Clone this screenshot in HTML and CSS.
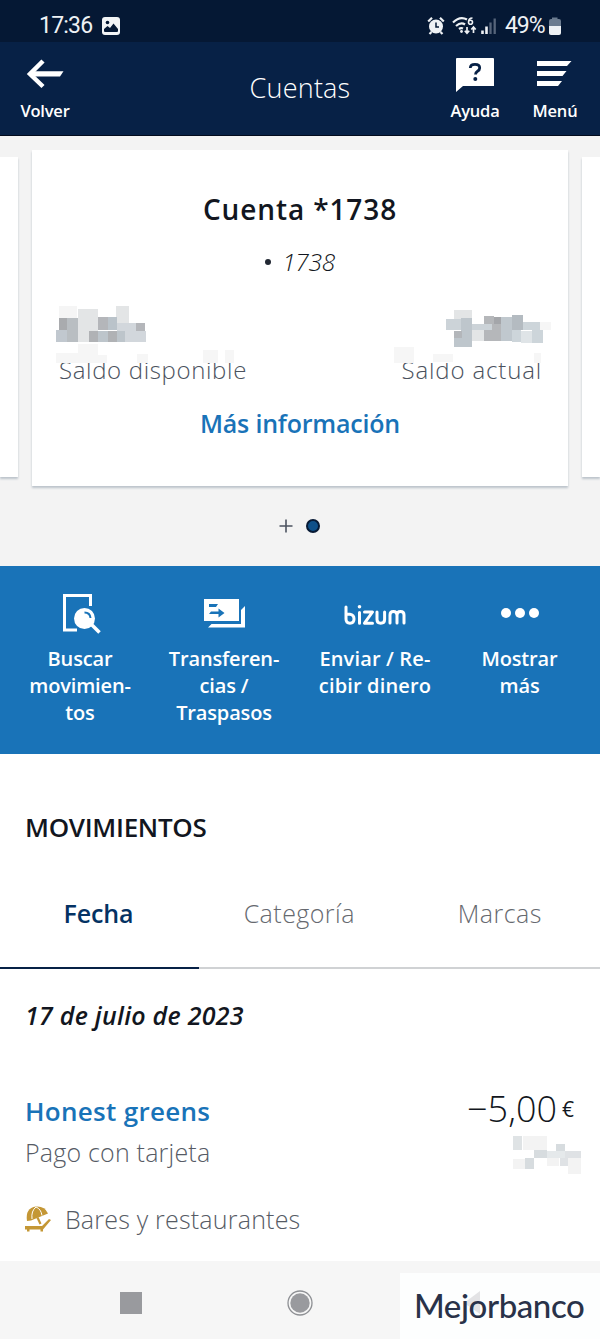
FILE: index.html
```html
<!DOCTYPE html>
<html lang="es">
<head>
<meta charset="utf-8">
<title>Cuentas</title>
<link rel="stylesheet" href="styles.css">
</head>
<body>
<div class="status">
  <span class="clock">17:36</span>
  <svg class="photo" width="18" height="18" viewBox="0 0 18 18"><rect width="18" height="18" rx="3" fill="#f2f4f6"/><path d="M2 14v-2l3.500-3 2.500 2 3.500-4.500L16 12v2q0 1-1 1H3q-1 0-1-1z" fill="#051834"/><circle cx="5.500" cy="5.500" r="1.800" fill="#051834"/></svg>
  <svg class="signals" width="72" height="20" viewBox="0 0 72 20" fill="none" stroke="#eef1f4">
    <circle cx="9" cy="10.500" r="7" fill="#eef1f4" stroke="none"/><path d="M1.200 5.500 5 1.800M13 1.800l3.800 3.700M4.500 16l-2 2M13.500 16l2 2" stroke-width="2.200"/><path d="M9 6.500v4.500h3" stroke="#051834" stroke-width="1.500"/>
    <path d="M26 6.500q7-7 14-3M29 10q5-4.500 9-1.500M32 13q2-1.500 4-.5" stroke-width="2.200"/><circle cx="34.500" cy="15.500" r="1.400" fill="#eef1f4" stroke="none"/>
    <path d="M45.500 2q-4 0-4 4.200M41.500 6.200a2 2 0 1 0 4 0 2 2 0 1 0-4 0" stroke-width="1.600"/>
    <path d="M40 11v6m-2.200-2.300 2.200 2.500 2.200-2.500M46.500 17v-6m-2.200 2.500 2.200-2.500 2.200 2.500" stroke-width="1.700"/>
    <path d="M55.500 18v-3.500M59.500 18v-7.500" stroke-width="2.600"/><path d="M63.500 18V6.500M67.700 18V2.500" stroke="#56647a" stroke-width="2.300"/>
  </svg>
  <span class="percent">49%</span>
  <svg width="14" height="20" viewBox="0 0 14 20"><path d="M4 3V1.500h5.500V3H11q2 0 2 2v6H1V5q0-2 2-2z" fill="#6b7b8f"/><path d="M1 10h12v7q0 2-2 2H3q-2 0-2-2z" fill="#eef1f4"/></svg>
</div>
<header class="topbar">
  <div class="nav back">
    <svg width="38" height="30" viewBox="0 0 38 30" fill="none" stroke="#fff" stroke-width="4.500"><path d="M17 2 4 15l13 12.500"/><path d="M5 12.300h32.500L34 17.500H5z" fill="#fff" stroke="none"/></svg>
    <span>Volver</span>
  </div>
  <h1>Cuentas</h1>
  <div class="nav help">
    <svg width="40" height="36" viewBox="0 0 40 36"><path d="M2 1h36q1 0 1 1v27H8l-7 6V2q0-1 1-1z" fill="#fff"/><path d="M15.300 11q0-3.700 4.700-3.700t4.700 3.600q0 2-2.200 3.300-2 1.200-2 3.300" fill="none" stroke="#072146" stroke-width="2.800"/><circle cx="20.300" cy="22" r="2" fill="#072146"/></svg>
    <span>Ayuda</span>
  </div>
  <div class="nav menu">
    <svg width="36" height="28" viewBox="0 0 36 28" fill="#fff"><path d="M1 1h34.500l-4.500 5H1zM1 11h29.500l-4 5H1zM1 21h25l-4 5H1z"/></svg>
    <span>Menú</span>
  </div>
</header>
<section class="carousel">
  <div class="cards">
    <div class="peek"></div>
    <article class="card">
      <h2>Cuenta *1738</h2>
      <p class="alias"><i class="bullet"></i>1738</p>
      <div class="balances">
        <div class="balance left">
          <span>Saldo disponible</span>
          <svg class="mosaic" width="200" height="64" viewBox="0 0 200 64"><path d="M0 20h200v43H0z" fill="#fff"/>
            <path d="M4 6h18v12H4z" fill="#f5f5f5"/><path d="M23 9h20v33H23z" fill="#e3e5e6"/><path d="M61 6h13v17H61z" fill="#e3e5e6"/><path d="M4 18h8v12H4z" fill="#a9abae"/><path d="M12 18h11v24H12z" fill="#b9bec2"/><path d="M1 30h11v12H1z" fill="#c1c8cf"/><path d="M43 17h10v13H43z" fill="#b4b6ba"/><path d="M53 17h9v13h-9z" fill="#bac3ca"/><path d="M62 23h19v8H62zM70 31h21v11H70z" fill="#d2d7dc"/><path d="M81 23h9v8h-9z" fill="#b4b6ba"/><path d="M34 31h9v11h-9zM53 31h9v11h-9z" fill="#b0b2b5"/><path d="M43 31h10v11H43zM62 31h8v11h-8z" fill="#bdc5cb"/>
            <path d="M1 53h22v10H1zM23 44h20v19H23zM43 55h9v8h-9zM82 54h11v9H82zM148 50h15v13h-15zM170 50h9v13h-9z" fill="#f6f6f6"/></svg>
        </div>
        <div class="balance right">
          <span>Saldo actual</span>
          <svg class="mosaic" width="160" height="64" viewBox="0 0 160 64"><path d="M0 20h160v43H0z" fill="#fff"/>
            <path d="M61 10h18v9H61z" fill="#e3e5e6"/><path d="M53 19h15v11H53zM79 24h20v6H79z" fill="#ccd3d8"/><path d="M68 18h11v29H68zM61 38h7v9h-7z" fill="#bec6cc"/><path d="M61 31h8v7h-8z" fill="#b3b6ba"/><path d="M79 30h12v11H79z" fill="#e3e5e6"/><path d="M91 16h10v8H91zM91 30h17v11H91z" fill="#b5b7ba"/><path d="M101 17h8v7h-8z" fill="#a4a6aa"/><path d="M99 24h9v6h-9z" fill="#b5b7ba"/><path d="M108 17h11v24h-11z" fill="#c0c8ce"/><path d="M119 15h11v15h-11z" fill="#b4bbc1"/><path d="M119 30h9v12h-9zM130 22h17v8h-17zM139 30h11v13h-11z" fill="#cdd5da"/><path d="M128 31h11v12h-11z" fill="#dfe4e7"/><path d="M147 22h11v8h-11zM1 47h20v16H1zM40 54h20v8H40zM141 53h7v10h-7z" fill="#f6f6f6"/></svg>
        </div>
      </div>
      <a class="more">Más información</a>
    </article>
    <div class="peek"></div>
  </div>
  <div class="pager">
    <svg width="14" height="14" viewBox="0 0 14 14"><path d="M7 .5v13M.5 7h13" stroke="#4c5360" stroke-width="1.600"/></svg>
    <i class="dot"></i>
  </div>
</section>
<nav class="actions">
  <div class="action a1">
    <svg width="40" height="42" viewBox="0 0 40 42"><path d="M28.500 14V3.500H2.500V38H15" fill="none" stroke="#fff" stroke-width="3"/><circle cx="22.500" cy="26.500" r="10.500" fill="#fff"/><path d="m29 32 8.500 8.500" stroke="#fff" stroke-width="3.500"/><path d="M22.500 20.500q5.500 0 6 5.500" fill="none" stroke="#1973b8" stroke-width="2"/></svg>
    <span>Buscar<br>movimien-<br>tos</span>
  </div>
  <div class="action a2">
    <svg width="42" height="42" viewBox="0 0 42 42"><path d="M1 7h35v22H1z" fill="#fff"/><path d="M5 35.500 8.500 32H38V18l4-4v21.500z" fill="#fff"/><path d="M6 12h9l-2 3H6zM6 22l2-2.500h7.500V16.500l6 4.500-6 4.500V22z" fill="#1973b8"/></svg>
    <span>Transferen-<br>cias /<br>Traspasos</span>
  </div>
  <div class="action a3">
    <svg width="64" height="42" viewBox="0 0 64 42" fill="none" stroke="#fff" stroke-width="3" stroke-linecap="round" stroke-linejoin="round"><path d="M3 15v12q0 4.200 4 4.200t4-4.200-4-4.700H3.500M16.500 20.500v10.700M21.500 20h8l-8 11.200h8M34 20v7.500q0 3.700 3.800 3.700t3.800-3.700V20M47 31V23q0-3.500 3.400-3.500T54 23v8m0-8q0-3.500 3.500-3.500T61 23v8"/><circle cx="16.500" cy="14.800" r="1.800" fill="#fff" stroke="none"/></svg>
    <span>Enviar / Re-<br>cibir dinero</span>
  </div>
  <div class="action a4">
    <svg width="40" height="42" viewBox="0 0 40 42" fill="#fff"><circle cx="6" cy="21" r="5"/><circle cx="20" cy="21" r="5"/><circle cx="34" cy="21" r="5"/></svg>
    <span>Mostrar<br>más</span>
  </div>
</nav>
<main>
  <h3>MOVIMIENTOS</h3>
  <div class="tabs">
    <div class="tab active">Fecha</div>
    <div class="tab">Categoría</div>
    <div class="tab">Marcas</div>
  </div>
  <p class="date">17 de julio de 2023</p>
  <div class="movement">
    <div>
      <p class="merchant">Honest greens</p>
      <p class="method">Pago con tarjeta</p>
    </div>
    <div class="money">
      <p class="amount"><span>−5,00</span><small>€</small></p>
      <svg width="70" height="40" viewBox="0 0 70 40"><path d="M11 1h24v14H11zM1 24h12v10H1zM35 23h12v8H35zM56 22h13v17H56z" fill="#f3f3f3"/><path d="M1 1h9v14H1z" fill="#dfe3e5"/><path d="M22 15h13v8H22z" fill="#d7dcdf"/><path d="M13 23h9v11h-9zM44 9h9v7h-9z" fill="#d7dcdf"/><path d="M35 16h18v7H35z" fill="#e5e9eb"/><path d="M53 16h16v7H53zM48 23h8v8h-8z" fill="#dfe2e5"/></svg>
    </div>
  </div>
  <div class="category">
    <svg width="28" height="28" viewBox="0 0 28 28" fill="#c49735"><path d="M3 16Q1 3 12 1.500q9-.5 12 7L7 15.500z"/><path d="M8 14Q7 6 12 2M18 10.500Q17 4 12 2" fill="none" stroke="#fff"/><path d="m13.500 12.500 3 6.500" stroke="#c49735" stroke-width="2.200"/><path d="M1 21h17l7-7 2 1-8 9.500v2h-2.500v-2h-11v2H3v-2H1z"/></svg>
    <span>Bares y restaurantes</span>
  </div>
</main>
<footer>
  <svg width="22" height="22"><rect width="22" height="22" fill="#999a9e"/></svg>
  <svg class="home" width="26" height="26" viewBox="0 0 26 26"><circle cx="13" cy="13" r="12" fill="#f6f6f6" stroke="#8e9094" stroke-width="1.300"/><circle cx="13" cy="13" r="9.700" fill="#999a9e"/></svg>
  <div class="brand"><svg width="17" height="24" viewBox="0 0 17 24"><path d="M16 0v23L0 12z" fill="#e3e3e5"/></svg><span>Mejorbanco</span></div>
</footer>
</body>
</html>
```
FILE: styles.css
```css
* { box-sizing: border-box; margin: 0; padding: 0; }
body { width: 600px; height: 1339px; display: flex; flex-direction: column; overflow: hidden; background: #fff; color: #121620; font-family: "Open Sans", "Noto Sans", sans-serif; white-space: nowrap; }
svg { display: block; flex: none; }
h1, h2, h3 { font-weight: 400; }
.status { height: 42px; flex: none; display: flex; align-items: center; padding: 9px 38px 0 39px; background: #051834; color: #eef1f4; font-family: Roboto, sans-serif; font-size: 23px; }
.clock { width: 63px; letter-spacing: -0.8px; }
.signals { margin-left: auto; margin-right: 6px; }
.percent { width: 43px; letter-spacing: -1.1px; }
.topbar { height: 94px; flex: none; display: flex; justify-content: space-between; background: #072146; border-bottom: 1px solid #020b1d; color: #fff; padding: 0 18px; }
.nav { display: flex; flex-direction: column; align-items: center; width: 54px; font-weight: 600; font-size: 16.5px; letter-spacing: -0.2px; }
.nav span { line-height: 24px; margin-top: auto; margin-bottom: 12px; }
.nav svg { margin-top: 17px; }
.help { margin-left: auto; margin-right: 26px; }
.nav.help svg { margin-top: 15px; }
.nav.menu svg { margin-top: 18px; margin-left: -2px; }
h1 { flex: 1; padding-left: 80px; padding-top: 26px; text-align: center; font-size: 27px; font-weight: 350; line-height: 40px; letter-spacing: 0.2px; }
.carousel { height: 430px; flex: none; background: #f3f3f3; padding-top: 14px; }
.cards { display: flex; justify-content: space-between; height: 337px; }
.peek { width: 18px; height: 320px; margin-top: 7px; background: #fff; box-shadow: 0 2px 2px #bcc4cb; }
.card { width: 536px; height: 336px; background: #fff; box-shadow: 0 2px 2px #bcc4cb; text-align: center; padding-top: 39px; }
h2 { font-size: 28px; font-weight: 600; line-height: 40px; letter-spacing: 0.9px; }
.alias { display: flex; justify-content: center; align-items: center; gap: 11px; font-size: 24.5px; font-style: italic; font-weight: 350; line-height: 36px; margin-top: 15px; letter-spacing: -0.3px; }
.bullet { width: 6px; height: 6px; border-radius: 50%; background: #222833; }
.balances { display: flex; justify-content: space-between; padding: 0 26px 0 27px; margin-top: 20px; height: 86px; }
.balance { position: relative; padding-top: 53px; color: #4b525e; font-size: 24px; font-weight: 350; line-height: 34px; letter-spacing: 0.65px; }
.balance.right { letter-spacing: 0.85px; }
.mosaic { position: absolute; top: 0; left: -4px; }
.right .mosaic { left: -9px; }
.more { display: block; margin-top: 19px; color: #1973b8; font-size: 25px; font-weight: 600; line-height: 36px; letter-spacing: -0.2px; }
.pager { display: flex; justify-content: center; align-items: center; gap: 13px; margin: 32px 2px 0 0; height: 14px; }
.dot { width: 14px; height: 14px; border-radius: 50%; background: #0f5089; border: 2px solid #071a35; }
.actions { height: 188px; flex: none; display: flex; background: #1973b8; color: #fff; padding: 26px 8px 0; font-size: 20px; font-weight: 600; line-height: 27px; text-align: center; }
.action { width: 144px; display: flex; flex-direction: column; align-items: center; gap: 11px; letter-spacing: -0.15px; }
.a1 svg { margin-left: 3px; }
.a3 { width: 158px; letter-spacing: 0.15px; }
.a4 { width: 131px; }
main { height: 507px; flex: none; }
h3 { padding: 55px 25px 0; font-size: 26px; font-weight: 600; line-height: 36px; letter-spacing: -0.3px; }
.tabs { display: flex; margin-top: 49px; height: 75px; color: #66696f; font-size: 25px; font-weight: 350; line-height: 38px; text-align: center; letter-spacing: 0.45px; }
.tab { flex: 1; border-bottom: 2px solid #d0d2d4; }
.active { flex: none; width: 199px; padding-right: 2px; color: #043263; font-weight: 600; border-color: #072146; letter-spacing: -0.1px; }
.date { padding: 28px 25px 0; font-size: 25px; font-style: italic; font-weight: 600; line-height: 36px; letter-spacing: 0.25px; }
.movement { display: flex; justify-content: space-between; padding: 59px 18px 0 25px; height: 166px; }
.merchant { color: #1973b8; font-size: 26px; font-weight: 600; line-height: 38px; letter-spacing: 0.3px; }
.method, .category { color: #565b65; font-size: 25px; font-weight: 350; line-height: 40px; letter-spacing: 0.2px; }
.method { margin-top: 2px; }
.money { display: flex; flex-direction: column; align-items: flex-end; }
.amount { display: flex; align-items: center; margin-right: 8px; font-size: 36px; font-weight: 350; line-height: 44px; height: 41px; gap: 5px; margin-top: -4px; margin-bottom: 6px; }
.amount small { font-size: 21px; font-weight: 400; }
.category { display: flex; align-items: center; gap: 13px; padding-left: 24px; }
footer { height: 78px; flex: none; display: flex; align-items: center; padding: 5px 0 0 120px; background: #f6f6f6; }
.home { margin-left: 145px; }
.brand { width: 200px; height: 66px; margin: 7px 0 0 auto; padding-left: 14px; background: #fdfefe; color: #293249; font-family: Lato, sans-serif; font-size: 33px; letter-spacing: -0.4px; line-height: 64px; position: relative; }
.brand svg { position: absolute; left: 64px; top: 18px; }
.brand span { position: relative; font-weight: 500; }
```
